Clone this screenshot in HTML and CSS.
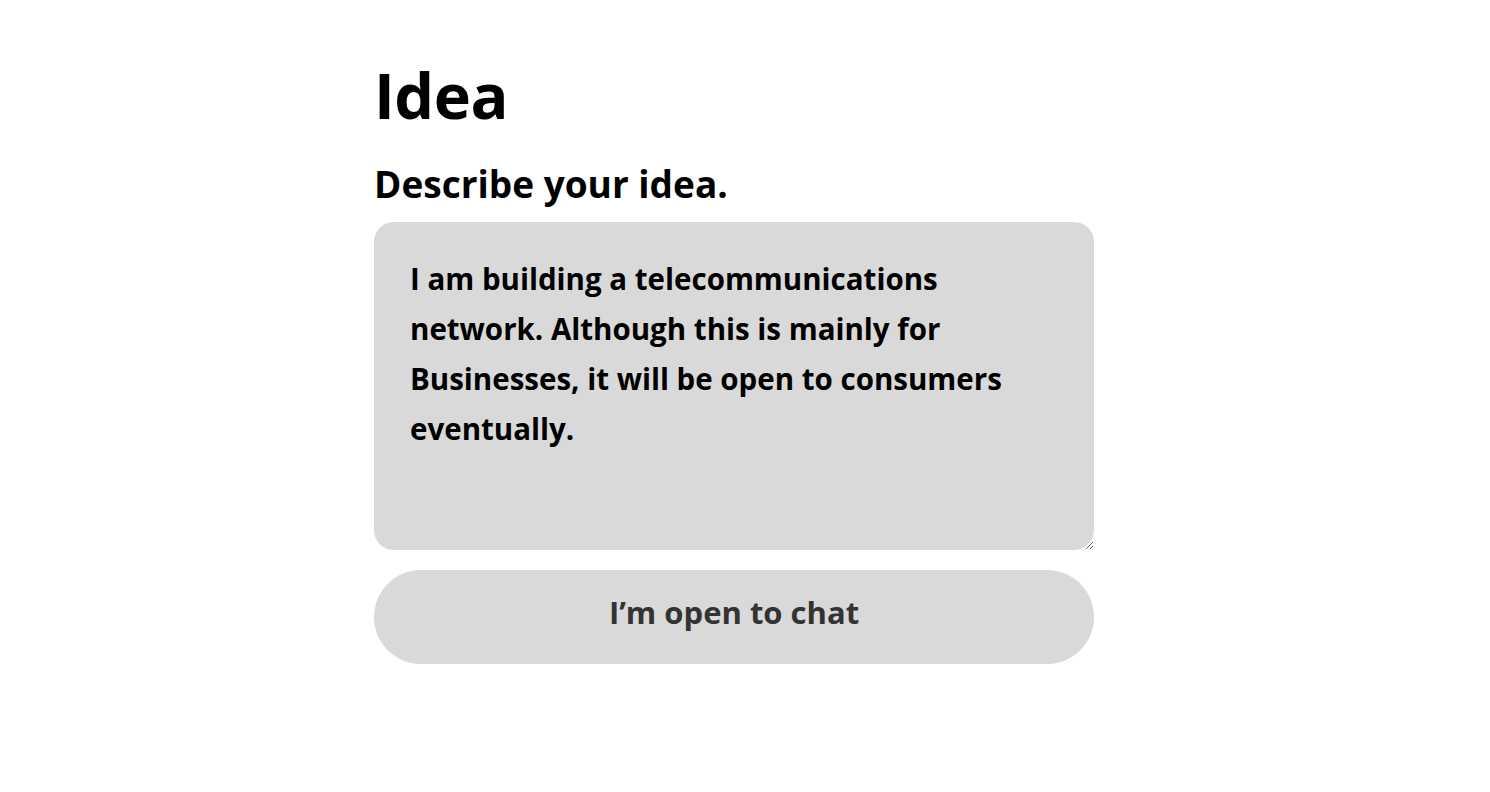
FILE: index.html
```html
<!DOCTYPE html>
<html lang="en">
<head>
<meta charset="utf-8">
<title>Idea</title>
<link rel="stylesheet" href="styles.css">
</head>
<body>
<main class="page">
  <h1 class="title">Idea</h1>
  <label class="label" for="idea">Describe your idea.</label>
  <textarea class="idea" id="idea">I am building a telecommunications network. Although this is mainly for Businesses, it will be open to consumers eventually.</textarea>
  <button class="chat" type="button">I’m open to chat</button>
</main>
</body>
</html>
```
FILE: styles.css
```css
html, body {
  margin: 0;
  padding: 0;
  background: #ffffff;
}

body {
  font-family: "Open Sans", "Noto Sans", sans-serif;
  color: #000000;
}

.page {
  display: flex;
  flex-direction: column;
  width: 720px;
  padding: 57px 0 0 374px;
}

.title {
  margin: 0;
  font-size: 63px;
  line-height: 76px;
  font-weight: 700;
  letter-spacing: -0.5px;
}

.label {
  margin-top: 29px;
  font-size: 37px;
  line-height: 44px;
  font-weight: 700;
}

.idea {
  box-sizing: border-box;
  margin-top: 16px;
  width: 720px;
  height: 328px;
  padding: 32px 36px;
  border: none;
  border-radius: 20px;
  background: #d9d9d9;
  font-family: "Open Sans", "Noto Sans", sans-serif;
  font-size: 29.5px;
  line-height: 50px;
  font-weight: 700;
  color: #000000;
  outline: none;
}

.chat {
  box-sizing: border-box;
  margin-top: 20px;
  width: 720px;
  height: 94px;
  border: none;
  border-radius: 47px;
  background: #d9d9d9;
  font-family: "Open Sans", "Noto Sans", sans-serif;
  font-size: 31px;
  font-weight: 700;
  color: #333333;
  padding: 0 0 10px 0;
}
```
